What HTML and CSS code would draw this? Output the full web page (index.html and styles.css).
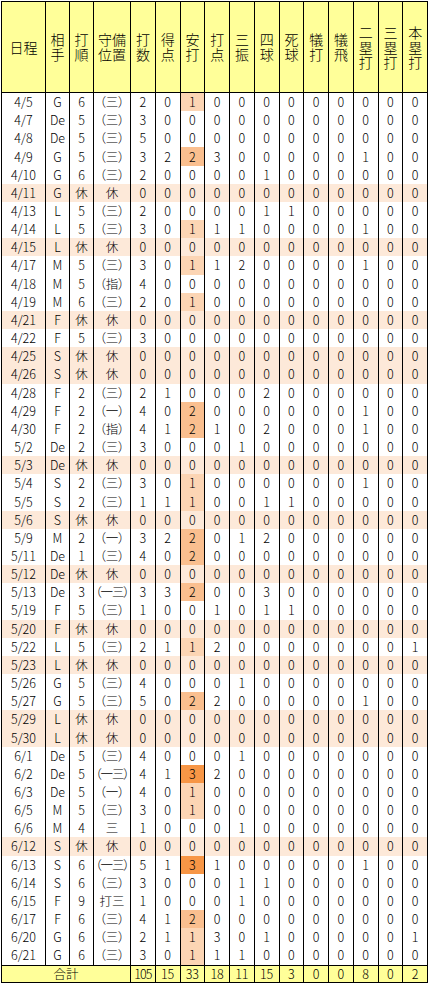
FILE: index.html
```html
<!DOCTYPE html>
<html lang="ja">
<head>
<meta charset="utf-8">
<title>成績</title>
<link rel="stylesheet" href="styles.css">
</head>
<body>
<table class="stats">
<colgroup>
<col class="c-date"><col class="c-opp"><col class="c-ord"><col class="c-pos">
<col class="c-n"><col class="c-n"><col class="c-n"><col class="c-n"><col class="c-n"><col class="c-n"><col class="c-n"><col class="c-n"><col class="c-n"><col class="c-n"><col class="c-n"><col class="c-n">
</colgroup>
<thead>
<tr>
<th>日程</th><th>相<br>手</th><th>打<br>順</th><th>守備<br>位置</th><th>打<br>数</th><th>得<br>点</th><th>安<br>打</th><th>打<br>点</th><th>三<br>振</th><th>四<br>球</th><th>死<br>球</th><th>犠<br>打</th><th>犠<br>飛</th><th>二<br>塁<br>打</th><th>三<br>塁<br>打</th><th>本<br>塁<br>打</th>
</tr>
</thead>
<tbody>
<tr><td>4/5</td><td>G</td><td>6</td><td class="pos">（三）</td><td>2</td><td>0</td><td class="h1">1</td><td>0</td><td>0</td><td>0</td><td>0</td><td>0</td><td>0</td><td>0</td><td>0</td><td>0</td></tr>
<tr><td>4/7</td><td>De</td><td>5</td><td class="pos">（三）</td><td>3</td><td>0</td><td>0</td><td>0</td><td>0</td><td>0</td><td>0</td><td>0</td><td>0</td><td>0</td><td>0</td><td>0</td></tr>
<tr><td>4/8</td><td>De</td><td>5</td><td class="pos">（三）</td><td>5</td><td>0</td><td>0</td><td>0</td><td>0</td><td>0</td><td>0</td><td>0</td><td>0</td><td>0</td><td>0</td><td>0</td></tr>
<tr><td>4/9</td><td>G</td><td>5</td><td class="pos">（三）</td><td>3</td><td>2</td><td class="h2">2</td><td>3</td><td>0</td><td>0</td><td>0</td><td>0</td><td>0</td><td>1</td><td>0</td><td>0</td></tr>
<tr><td>4/10</td><td>G</td><td>6</td><td class="pos">（三）</td><td>2</td><td>0</td><td>0</td><td>0</td><td>0</td><td>1</td><td>0</td><td>0</td><td>0</td><td>0</td><td>0</td><td>0</td></tr>
<tr class="rest"><td>4/11</td><td>G</td><td>休</td><td>休</td><td>0</td><td>0</td><td>0</td><td>0</td><td>0</td><td>0</td><td>0</td><td>0</td><td>0</td><td>0</td><td>0</td><td>0</td></tr>
<tr><td>4/13</td><td>L</td><td>5</td><td class="pos">（三）</td><td>2</td><td>0</td><td>0</td><td>0</td><td>0</td><td>1</td><td>1</td><td>0</td><td>0</td><td>0</td><td>0</td><td>0</td></tr>
<tr><td>4/14</td><td>L</td><td>5</td><td class="pos">（三）</td><td>3</td><td>0</td><td class="h1">1</td><td>1</td><td>1</td><td>0</td><td>0</td><td>0</td><td>0</td><td>1</td><td>0</td><td>0</td></tr>
<tr class="rest"><td>4/15</td><td>L</td><td>休</td><td>休</td><td>0</td><td>0</td><td>0</td><td>0</td><td>0</td><td>0</td><td>0</td><td>0</td><td>0</td><td>0</td><td>0</td><td>0</td></tr>
<tr><td>4/17</td><td>M</td><td>5</td><td class="pos">（三）</td><td>3</td><td>0</td><td class="h1">1</td><td>1</td><td>2</td><td>0</td><td>0</td><td>0</td><td>0</td><td>1</td><td>0</td><td>0</td></tr>
<tr><td>4/18</td><td>M</td><td>5</td><td class="pos">（指）</td><td>4</td><td>0</td><td>0</td><td>0</td><td>0</td><td>0</td><td>0</td><td>0</td><td>0</td><td>0</td><td>0</td><td>0</td></tr>
<tr><td>4/19</td><td>M</td><td>6</td><td class="pos">（三）</td><td>2</td><td>0</td><td class="h1">1</td><td>0</td><td>0</td><td>0</td><td>0</td><td>0</td><td>0</td><td>0</td><td>0</td><td>0</td></tr>
<tr class="rest"><td>4/21</td><td>F</td><td>休</td><td>休</td><td>0</td><td>0</td><td>0</td><td>0</td><td>0</td><td>0</td><td>0</td><td>0</td><td>0</td><td>0</td><td>0</td><td>0</td></tr>
<tr><td>4/22</td><td>F</td><td>5</td><td class="pos">（三）</td><td>3</td><td>0</td><td>0</td><td>0</td><td>0</td><td>0</td><td>0</td><td>0</td><td>0</td><td>0</td><td>0</td><td>0</td></tr>
<tr class="rest"><td>4/25</td><td>S</td><td>休</td><td>休</td><td>0</td><td>0</td><td>0</td><td>0</td><td>0</td><td>0</td><td>0</td><td>0</td><td>0</td><td>0</td><td>0</td><td>0</td></tr>
<tr class="rest"><td>4/26</td><td>S</td><td>休</td><td>休</td><td>0</td><td>0</td><td>0</td><td>0</td><td>0</td><td>0</td><td>0</td><td>0</td><td>0</td><td>0</td><td>0</td><td>0</td></tr>
<tr><td>4/28</td><td>F</td><td>2</td><td class="pos">（三）</td><td>2</td><td>1</td><td>0</td><td>0</td><td>0</td><td>2</td><td>0</td><td>0</td><td>0</td><td>0</td><td>0</td><td>0</td></tr>
<tr><td>4/29</td><td>F</td><td>2</td><td class="pos">（一）</td><td>4</td><td>0</td><td class="h2">2</td><td>0</td><td>0</td><td>0</td><td>0</td><td>0</td><td>0</td><td>1</td><td>0</td><td>0</td></tr>
<tr><td>4/30</td><td>F</td><td>2</td><td class="pos">（指）</td><td>4</td><td>1</td><td class="h2">2</td><td>1</td><td>0</td><td>2</td><td>0</td><td>0</td><td>0</td><td>1</td><td>0</td><td>0</td></tr>
<tr><td>5/2</td><td>De</td><td>2</td><td class="pos">（三）</td><td>3</td><td>0</td><td>0</td><td>0</td><td>1</td><td>0</td><td>0</td><td>0</td><td>0</td><td>0</td><td>0</td><td>0</td></tr>
<tr class="rest"><td>5/3</td><td>De</td><td>休</td><td>休</td><td>0</td><td>0</td><td>0</td><td>0</td><td>0</td><td>0</td><td>0</td><td>0</td><td>0</td><td>0</td><td>0</td><td>0</td></tr>
<tr><td>5/4</td><td>S</td><td>2</td><td class="pos">（三）</td><td>3</td><td>0</td><td class="h1">1</td><td>0</td><td>0</td><td>0</td><td>0</td><td>0</td><td>0</td><td>1</td><td>0</td><td>0</td></tr>
<tr><td>5/5</td><td>S</td><td>2</td><td class="pos">（三）</td><td>1</td><td>1</td><td class="h1">1</td><td>0</td><td>0</td><td>1</td><td>1</td><td>0</td><td>0</td><td>0</td><td>0</td><td>0</td></tr>
<tr class="rest"><td>5/6</td><td>S</td><td>休</td><td>休</td><td>0</td><td>0</td><td>0</td><td>0</td><td>0</td><td>0</td><td>0</td><td>0</td><td>0</td><td>0</td><td>0</td><td>0</td></tr>
<tr><td>5/9</td><td>M</td><td>2</td><td class="pos">（一）</td><td>3</td><td>2</td><td class="h2">2</td><td>0</td><td>1</td><td>2</td><td>0</td><td>0</td><td>0</td><td>0</td><td>0</td><td>0</td></tr>
<tr><td>5/11</td><td>De</td><td>1</td><td class="pos">（三）</td><td>4</td><td>0</td><td class="h2">2</td><td>0</td><td>0</td><td>0</td><td>0</td><td>0</td><td>0</td><td>0</td><td>0</td><td>0</td></tr>
<tr class="rest"><td>5/12</td><td>De</td><td>休</td><td>休</td><td>0</td><td>0</td><td>0</td><td>0</td><td>0</td><td>0</td><td>0</td><td>0</td><td>0</td><td>0</td><td>0</td><td>0</td></tr>
<tr><td>5/13</td><td>De</td><td>3</td><td class="pos wide">（一三）</td><td>3</td><td>3</td><td class="h2">2</td><td>0</td><td>0</td><td>3</td><td>0</td><td>0</td><td>0</td><td>0</td><td>0</td><td>0</td></tr>
<tr><td>5/19</td><td>F</td><td>5</td><td class="pos">（三）</td><td>1</td><td>0</td><td>0</td><td>1</td><td>0</td><td>1</td><td>1</td><td>0</td><td>0</td><td>0</td><td>0</td><td>0</td></tr>
<tr class="rest"><td>5/20</td><td>F</td><td>休</td><td>休</td><td>0</td><td>0</td><td>0</td><td>0</td><td>0</td><td>0</td><td>0</td><td>0</td><td>0</td><td>0</td><td>0</td><td>0</td></tr>
<tr><td>5/22</td><td>L</td><td>5</td><td class="pos">（三）</td><td>2</td><td>1</td><td class="h1">1</td><td>2</td><td>0</td><td>0</td><td>0</td><td>0</td><td>0</td><td>0</td><td>0</td><td>1</td></tr>
<tr class="rest"><td>5/23</td><td>L</td><td>休</td><td>休</td><td>0</td><td>0</td><td>0</td><td>0</td><td>0</td><td>0</td><td>0</td><td>0</td><td>0</td><td>0</td><td>0</td><td>0</td></tr>
<tr><td>5/26</td><td>G</td><td>5</td><td class="pos">（三）</td><td>4</td><td>0</td><td>0</td><td>0</td><td>1</td><td>0</td><td>0</td><td>0</td><td>0</td><td>0</td><td>0</td><td>0</td></tr>
<tr><td>5/27</td><td>G</td><td>5</td><td class="pos">（三）</td><td>5</td><td>0</td><td class="h2">2</td><td>2</td><td>0</td><td>0</td><td>0</td><td>0</td><td>0</td><td>1</td><td>0</td><td>0</td></tr>
<tr class="rest"><td>5/29</td><td>L</td><td>休</td><td>休</td><td>0</td><td>0</td><td>0</td><td>0</td><td>0</td><td>0</td><td>0</td><td>0</td><td>0</td><td>0</td><td>0</td><td>0</td></tr>
<tr class="rest"><td>5/30</td><td>L</td><td>休</td><td>休</td><td>0</td><td>0</td><td>0</td><td>0</td><td>0</td><td>0</td><td>0</td><td>0</td><td>0</td><td>0</td><td>0</td><td>0</td></tr>
<tr><td>6/1</td><td>De</td><td>5</td><td class="pos">（三）</td><td>4</td><td>0</td><td>0</td><td>0</td><td>1</td><td>0</td><td>0</td><td>0</td><td>0</td><td>0</td><td>0</td><td>0</td></tr>
<tr><td>6/2</td><td>De</td><td>5</td><td class="pos wide">（一三）</td><td>4</td><td>1</td><td class="h3">3</td><td>2</td><td>0</td><td>0</td><td>0</td><td>0</td><td>0</td><td>0</td><td>0</td><td>0</td></tr>
<tr><td>6/3</td><td>De</td><td>5</td><td class="pos">（一）</td><td>4</td><td>0</td><td class="h1">1</td><td>0</td><td>0</td><td>0</td><td>0</td><td>0</td><td>0</td><td>0</td><td>0</td><td>0</td></tr>
<tr><td>6/5</td><td>M</td><td>5</td><td class="pos">（三）</td><td>3</td><td>0</td><td class="h1">1</td><td>0</td><td>0</td><td>0</td><td>0</td><td>0</td><td>0</td><td>0</td><td>0</td><td>0</td></tr>
<tr><td>6/6</td><td>M</td><td>4</td><td>三</td><td>1</td><td>0</td><td>0</td><td>0</td><td>1</td><td>0</td><td>0</td><td>0</td><td>0</td><td>0</td><td>0</td><td>0</td></tr>
<tr class="rest"><td>6/12</td><td>S</td><td>休</td><td>休</td><td>0</td><td>0</td><td>0</td><td>0</td><td>0</td><td>0</td><td>0</td><td>0</td><td>0</td><td>0</td><td>0</td><td>0</td></tr>
<tr><td>6/13</td><td>S</td><td>6</td><td class="pos wide">（一三）</td><td>5</td><td>1</td><td class="h3">3</td><td>1</td><td>0</td><td>0</td><td>0</td><td>0</td><td>0</td><td>1</td><td>0</td><td>0</td></tr>
<tr><td>6/14</td><td>S</td><td>6</td><td class="pos">（三）</td><td>3</td><td>0</td><td>0</td><td>0</td><td>1</td><td>1</td><td>0</td><td>0</td><td>0</td><td>0</td><td>0</td><td>0</td></tr>
<tr><td>6/15</td><td>F</td><td>9</td><td>打三</td><td>1</td><td>0</td><td>0</td><td>0</td><td>1</td><td>0</td><td>0</td><td>0</td><td>0</td><td>0</td><td>0</td><td>0</td></tr>
<tr><td>6/17</td><td>F</td><td>6</td><td class="pos">（三）</td><td>4</td><td>1</td><td class="h2">2</td><td>0</td><td>0</td><td>0</td><td>0</td><td>0</td><td>0</td><td>0</td><td>0</td><td>0</td></tr>
<tr><td>6/20</td><td>G</td><td>6</td><td class="pos">（三）</td><td>2</td><td>1</td><td class="h1">1</td><td>3</td><td>0</td><td>1</td><td>0</td><td>0</td><td>0</td><td>0</td><td>0</td><td>1</td></tr>
<tr><td>6/21</td><td>G</td><td>6</td><td class="pos">（三）</td><td>3</td><td>0</td><td class="h1">1</td><td>1</td><td>1</td><td>0</td><td>0</td><td>0</td><td>0</td><td>0</td><td>0</td><td>0</td></tr>
</tbody>
<tfoot>
<tr><td colspan="4">合計</td><td class="tight">105</td><td>15</td><td>33</td><td>18</td><td>11</td><td>15</td><td>3</td><td>0</td><td>0</td><td>8</td><td>0</td><td>2</td></tr>
</tfoot>
</table>
</body>
</html>
```

FILE: styles.css
```css
html, body {
  margin: 0;
  padding: 0;
  background: #ffffff;
}

body {
  font-family: "Noto Sans CJK JP", "Noto Sans", sans-serif;
  font-weight: 300;
  color: #000000;
}

.stats {
  border-collapse: collapse;
  table-layout: fixed;
  width: 427px;
  margin: 1px 0 0 1px;
  border: 1px solid #000000;
}

.c-date { width: 44px; }
.c-opp { width: 24px; }
.c-ord { width: 24px; }
.c-pos { width: 37px; }
.c-n { width: 24.75px; }

.stats th,
.stats td {
  border-left: 1px solid #000000;
  border-right: 1px solid #000000;
  padding: 0;
  text-align: center;
  vertical-align: middle;
  white-space: nowrap;
  overflow: hidden;
  color: #000000;
}

.stats thead th {
  background: #ffff99;
  font-weight: 300;
  font-size: 14px;
  line-height: 15px;
  height: 90px;
  border-bottom: 1px solid #000000;
}

.stats tbody td {
  font-size: 12.5px;
  line-height: 16px;
  height: 18.17px;
}

.stats tbody tr.rest td {
  background: #fde9d9;
}

.stats td.pos {
  font-feature-settings: "palt";
}

.stats td.wide {
  letter-spacing: -1px;
}

.stats td.h1 { background: #fcd5b4; }
.stats td.h2 { background: #fabf8f; }
.stats td.h3 { background: #f79646; }

.stats tfoot td {
  background: #ffff99;
  font-size: 12.5px;
  line-height: 15px;
  height: 16px;
  border-top: 1px solid #000000;
  border-bottom: 1px solid #000000;
}

.stats tfoot td.tight {
  letter-spacing: -1px;
}
```
